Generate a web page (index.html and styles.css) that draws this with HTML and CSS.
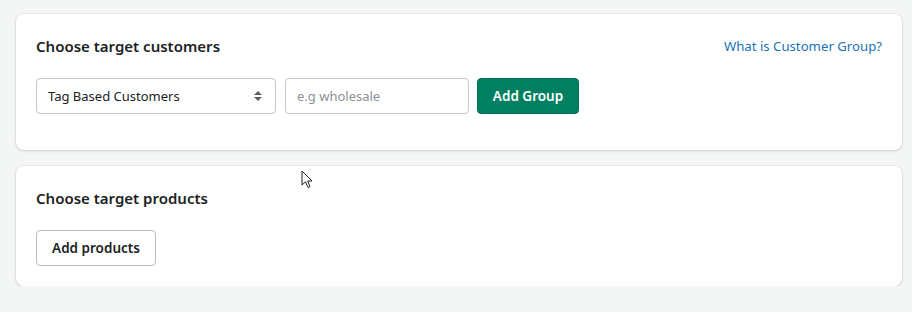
FILE: index.html
```html
<!DOCTYPE html>
<html lang="en">
<head>
<meta charset="utf-8">
<title>Customer groups</title>
<link rel="stylesheet" href="styles.css">
</head>
<body>
<main class="page">
  <section class="card card-customers">
    <div class="card-header">
      <h2 class="card-title">Choose target customers</h2>
      <a class="help-link" href="#">What is Customer Group?</a>
    </div>
    <div class="form-row">
      <div class="select">
        <span class="select-value">Tag Based Customers</span>
        <svg class="select-arrows" width="10" height="14" viewBox="0 0 10 14" aria-hidden="true">
          <path d="M5 2 L9 6 H1 Z" fill="#5c5f62"/>
          <path d="M5 12 L9 8 H1 Z" fill="#5c5f62"/>
        </svg>
      </div>
      <div class="text-input"><span class="placeholder">e.g wholesale</span></div>
      <button class="btn btn-primary" type="button">Add Group</button>
    </div>
  </section>
  <section class="card card-products">
    <div class="card-header">
      <h2 class="card-title">Choose target products</h2>
    </div>
    <div class="form-row">
      <button class="btn btn-outline" type="button">Add products</button>
    </div>
  </section>
  <svg class="cursor" width="14" height="20" viewBox="0 0 14 20" aria-hidden="true">
    <path d="M1 1 L1 15 L4.5 11.8 L7 17.5 L9 16.6 L6.6 11 L11 11 Z" fill="#fff" stroke="#222" stroke-width="1" stroke-linejoin="round"/>
  </svg>
</main>
</body>
</html>
```

FILE: styles.css
```css
* { box-sizing: border-box; }
html, body {
  margin: 0;
  padding: 0;
  background: #f4f5f5;
  font-family: "Noto Sans", "Open Sans", sans-serif;
  color: #202223;
}
.page {
  position: relative;
  padding: 14px 10px 0 16px;
  display: flex;
  flex-direction: column;
  gap: 16px;
}
.card {
  background: #fff;
  border-radius: 8px;
  box-shadow: 0 0 0 1px rgba(63, 63, 68, 0.05), 0 1px 3px rgba(63, 63, 68, 0.18);
  padding: 20px;
}
.card-customers { height: 136px; }
.card-products { height: 120px; }
.card-header {
  display: flex;
  justify-content: space-between;
  align-items: center;
  height: 24px;
  margin-bottom: 20px;
}
.card-title {
  margin: 0;
  font-size: 15px;
  font-weight: 600;
  line-height: 24px;
  color: #202223;
}
.help-link {
  font-size: 13.2px;
  color: #1a73b8;
  text-decoration: none;
  line-height: 20px;
}
.form-row {
  display: flex;
  align-items: center;
  height: 36px;
}
.select {
  width: 240px;
  height: 36px;
  border: 1px solid #c4c6c8;
  border-radius: 4px;
  display: flex;
  align-items: center;
  justify-content: space-between;
  padding: 0 12px 0 11px;
  font-size: 13px;
  margin-right: 9px;
}
.select-arrows { display: block; }
.text-input {
  width: 184px;
  height: 36px;
  border: 1px solid #c4c6c8;
  border-radius: 4px;
  display: flex;
  align-items: center;
  padding: 0 11px;
  font-size: 13px;
  margin-right: 8px;
}
.placeholder { color: #8c9196; }
.btn {
  height: 36px;
  border-radius: 4px;
  font-family: inherit;
  font-size: 13.5px;
  font-weight: 600;
  padding: 0;
  white-space: nowrap;
  text-align: center;
  cursor: pointer;
}
.btn-primary {
  width: 102px;
  background: #008060;
  color: #fff;
  border: 1px solid #006e52;
}
.btn-outline {
  width: 120px;
  background: #fff;
  color: #202223;
  border: 1px solid #babfc3;
}
.cursor {
  position: absolute;
  left: 301px;
  top: 170px;
}
```
